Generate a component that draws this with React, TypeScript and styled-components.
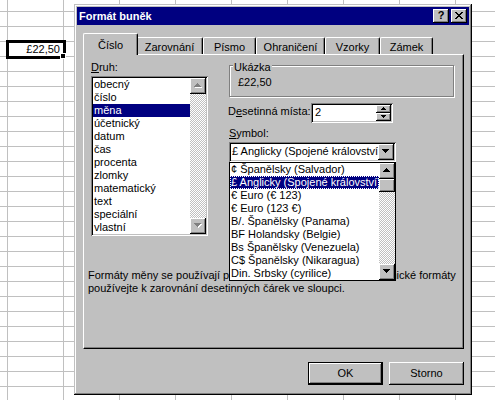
import React from "react";
import styled, { createGlobalStyle } from "styled-components";

const FACE = "#c0c0c0";
const SHADOW = "#808080";
const NAVY = "#000080";

const raised = `
  background: ${FACE};
  box-shadow: inset -1px -1px #000, inset 1px 1px #fff, inset -2px -2px ${SHADOW};
`;

const sunken = `
  background: #fff;
  box-shadow: inset 1px 1px ${SHADOW}, inset -1px -1px #fff, inset 2px 2px #000, inset -2px -2px ${FACE};
`;

const GlobalStyle = createGlobalStyle`
  html, body { margin: 0; padding: 0; }
  body {
    width: 495px;
    height: 400px;
    overflow: hidden;
    background: #fff;
    font-family: "Liberation Sans", Arial, sans-serif;
    font-size: 11px;
    line-height: 13px;
    color: #000;
  }
  * { box-sizing: border-box; }
`;

const CATEGORIES = [
  "obecný",
  "číslo",
  "měna",
  "účetnický",
  "datum",
  "čas",
  "procenta",
  "zlomky",
  "matematický",
  "text",
  "speciální",
  "vlastní",
];

const SYMBOLS = [
  "¢ Španělsky (Salvador)",
  "£ Anglicky (Spojené království)",
  "€ Euro (€ 123)",
  "€ Euro (123 €)",
  "B/. Španělsky (Panama)",
  "BF Holandsky (Belgie)",
  "Bs Španělsky (Venezuela)",
  "C$ Španělsky (Nikaragua)",
  "Din. Srbsky (cyrilice)",
];

const TABS: [string, number][] = [
  ["Číslo", 51],
  ["Zarovnání", 67],
  ["Písmo", 53],
  ["Ohraničení", 69],
  ["Vzorky", 55],
  ["Zámek", 53],
];

const ARROWS = {
  up: "M3 0h1v1H3zM2 1h3v1H2zM1 2h5v1H1zM0 3h7v1H0z",
  down: "M0 0h7v1H0zM1 1h5v1H1zM2 2h3v1H2zM3 3h1v1H3z",
  upSmall: "M2 0h1v1H2zM1 1h3v1H1zM0 2h5v1H0z",
  downSmall: "M0 0h5v1H0zM1 1h3v1H1zM2 2h1v1H2z",
};

function Arrow({ dir, disabled }: { dir: keyof typeof ARROWS; disabled?: boolean }) {
  const small = dir.endsWith("Small");
  const w = small ? 5 : 7;
  const h = small ? 3 : 4;
  return (
    <svg width={w + 1} height={h + 1} viewBox={`0 0 ${w + 1} ${h + 1}`} shapeRendering="crispEdges" style={{ display: "block" }}>
      {disabled && <path d={ARROWS[dir]} fill="#fff" transform="translate(1 1)" />}
      <path d={ARROWS[dir]} fill={disabled ? SHADOW : "#000"} />
    </svg>
  );
}

function CloseGlyph() {
  return (
    <svg width="8" height="7" viewBox="0 0 8 7" shapeRendering="crispEdges" style={{ display: "block" }}>
      <path
        d="M0 0h2v1H0zM6 0h2v1H6zM1 1h2v1H1zM5 1h2v1H5zM2 2h4v1H2zM3 3h2v1H3zM2 4h4v1H2zM1 5h2v1H1zM5 5h2v1H5zM0 6h2v1H0zM6 6h2v1H6z"
        fill="#000"
      />
    </svg>
  );
}

function Scrollbar({ disabled, thumb }: { disabled?: boolean; thumb?: boolean }) {
  return (
    <ScrollTrack>
      <ScrollButton>
        <Arrow dir="up" disabled={disabled} />
      </ScrollButton>
      <Track>{thumb && <Thumb />}</Track>
      <ScrollButton>
        <Arrow dir="down" disabled={disabled} />
      </ScrollButton>
    </ScrollTrack>
  );
}

function Dialog() {
  return (
    <Window>
      <TitleBar>
        <TitleText>Formát buněk</TitleText>
        <CaptionButton>?</CaptionButton>
        <CaptionButton $gap={2}>
          <CloseGlyph />
        </CaptionButton>
      </TitleBar>
      <Body>
        <TabRow>
          {TABS.map(([label, w], i) => (
            <Tab key={label} $w={w} $active={i === 0}>
              {label}
            </Tab>
          ))}
        </TabRow>
        <Panel>
          <Top>
            <LeftCol>
              <FieldLabel>
                <Key>D</Key>ruh:
              </FieldLabel>
              <ListBox>
                <Items>
                  {CATEGORIES.map((c, i) => (
                    <Item key={c} $selected={i === 2}>
                      {c}
                    </Item>
                  ))}
                </Items>
                <Scrollbar disabled />
              </ListBox>
            </LeftCol>
            <RightCol>
              <GroupBox>
                <Legend>Ukázka</Legend>
                <Sample>£22,50</Sample>
              </GroupBox>
              <SpinRow>
                <SpinLabel>
                  D<Key>e</Key>setinná místa:
                </SpinLabel>
                <SpinEdit>
                  <EditText>2</EditText>
                  <SpinButtons>
                    <SpinButton>
                      <Arrow dir="upSmall" />
                    </SpinButton>
                    <SpinButton>
                      <Arrow dir="downSmall" />
                    </SpinButton>
                  </SpinButtons>
                </SpinEdit>
              </SpinRow>
              <SymbolLabel>
                <Key>S</Key>ymbol:
              </SymbolLabel>
              <Combo>
                <ComboText>£ Anglicky (Spojené království)</ComboText>
                <ComboButton>
                  <Arrow dir="down" />
                </ComboButton>
              </Combo>
            </RightCol>
          </Top>
          <Description>
            <Line>Formáty měny se používají pro obecné peněžní hodnoty. Účetnické formáty</Line>
            <Line>používejte k zarovnání desetinných čárek ve sloupci.</Line>
          </Description>
          <DropList>
            <Items>
              {SYMBOLS.map((s, i) => (
                <DropItem key={s} $selected={i === 1}>
                  {s}
                </DropItem>
              ))}
            </Items>
            <Scrollbar thumb />
          </DropList>
        </Panel>
        <Footer>
          <PushButton $default>OK</PushButton>
          <PushButton>Storno</PushButton>
        </Footer>
      </Body>
    </Window>
  );
}

export default function App() {
  const cells: React.ReactNode[] = [];
  for (let r = 0; r < 27; r++) {
    for (let c = 0; c < 10; c++) {
      const active = r === 3 && c === 1;
      cells.push(
        <Cell key={`${r}-${c}`} $active={active}>
          {active && (
            <>
              £22,50
              <FillHandle />
            </>
          )}
        </Cell>
      );
    }
  }
  return (
    <>
      <GlobalStyle />
      <Sheet>
        {cells}
        <Dialog />
      </Sheet>
    </>
  );
}

const Sheet = styled.div`
  position: relative;
  width: 495px;
  height: 400px;
  overflow: hidden;
  display: grid;
  grid-template-columns: 8px repeat(9, 56px);
  grid-template-rows: 12px repeat(26, 15px);
`;

const Cell = styled.div<{ $active?: boolean }>`
  border-right: 1px solid ${FACE};
  border-bottom: 1px solid ${FACE};
  ${({ $active }) =>
    $active &&
    `
    position: relative;
    z-index: 1;
    display: flex;
    align-items: center;
    justify-content: flex-end;
    padding-right: 3px;
    outline: 3px solid #000;
    outline-offset: -1px;
    white-space: nowrap;
  `}
`;

const FillHandle = styled.span`
  position: absolute;
  right: -3px;
  bottom: -3px;
  width: 6px;
  height: 6px;
  background: #000;
  border: 1px solid #fff;
`;

const Window = styled.div`
  position: absolute;
  left: 74px;
  top: 4px;
  width: 398px;
  height: 391px;
  padding: 3px;
  display: flex;
  flex-direction: column;
  background: ${FACE};
  box-shadow: inset -1px -1px #000, inset 1px 1px ${FACE}, inset -2px -2px ${SHADOW}, inset 2px 2px #fff;
`;

const TitleBar = styled.div`
  height: 18px;
  flex: none;
  display: flex;
  align-items: center;
  padding: 0 2px;
  background: ${NAVY};
`;

const TitleText = styled.div`
  flex: 1;
  color: #fff;
  font-weight: 700;
  white-space: nowrap;
`;

const CaptionButton = styled.div<{ $gap?: number }>`
  ${raised}
  width: 16px;
  height: 14px;
  margin-left: ${({ $gap }) => $gap ?? 0}px;
  display: flex;
  align-items: center;
  justify-content: center;
  font-weight: 700;
  font-size: 11px;
  padding-bottom: 1px;
`;

const Body = styled.div`
  flex: 1;
  display: flex;
  flex-direction: column;
  padding: 8px 5px 7px 6px;
`;

const TabRow = styled.div`
  position: relative;
  z-index: 1;
  height: 22px;
  display: flex;
  align-items: flex-end;
  padding-left: 2px;
  margin-bottom: -1px;
`;

const Tab = styled.div<{ $w: number; $active?: boolean }>`
  position: relative;
  z-index: ${({ $active }) => ($active ? 2 : 1)};
  width: ${({ $w, $active }) => $w + ($active ? 4 : 0)}px;
  height: ${({ $active }) => ($active ? 22 : 17)}px;
  margin: ${({ $active }) => ($active ? "0 -2px" : "0 0 1px")};
  padding-top: ${({ $active }) => ($active ? 5 : 3)}px;
  background: ${FACE};
  border-top: 1px solid #fff;
  border-left: 1px solid #fff;
  border-right: 1px solid #000;
  border-radius: 2px 2px 0 0;
  box-shadow: inset -1px 0 ${SHADOW};
  text-align: center;
  white-space: nowrap;
`;

const Panel = styled.div`
  position: relative;
  height: 295px;
  flex: none;
  padding: 6px 0 0 7px;
  border-top: 1px solid #fff;
  border-left: 1px solid #fff;
  border-right: 1px solid #000;
  border-bottom: 1px solid #000;
  box-shadow: inset -1px -1px ${SHADOW};
`;

const Top = styled.div`
  display: flex;
  align-items: flex-start;
`;

const LeftCol = styled.div`
  width: 117px;
  display: flex;
  flex-direction: column;
`;

const RightCol = styled.div`
  width: 225px;
  margin-left: 21px;
  display: flex;
  flex-direction: column;
`;

const Key = styled.span`
  text-decoration: underline;
`;

const FieldLabel = styled.div`
  height: 13px;
  margin-bottom: 2px;
`;

const ListBox = styled.div`
  ${sunken}
  height: 160px;
  padding: 2px;
  display: flex;
`;

const Items = styled.div`
  flex: 1;
  min-width: 0;
  overflow: hidden;
`;

const Item = styled.div<{ $selected?: boolean }>`
  height: 13px;
  padding-left: 1px;
  white-space: nowrap;
  background: ${({ $selected }) => ($selected ? NAVY : "transparent")};
  color: ${({ $selected }) => ($selected ? "#fff" : "#000")};
`;

const ScrollTrack = styled.div`
  width: 16px;
  flex: none;
  display: flex;
  flex-direction: column;
`;

const ScrollButton = styled.div`
  ${raised}
  height: 16px;
  flex: none;
  display: flex;
  align-items: center;
  justify-content: center;
  padding-bottom: 1px;
`;

const Track = styled.div`
  flex: 1;
  background-color: #fff;
  background-image: repeating-conic-gradient(${FACE} 0 25%, #fff 0 50%);
  background-size: 2px 2px;
`;

const Thumb = styled.div`
  ${raised}
  height: 13px;
`;

const GroupBox = styled.div`
  position: relative;
  margin-top: 4px;
  height: 32px;
  padding: 10px 0 0 8px;
  border: 1px solid ${SHADOW};
  box-shadow: inset 1px 1px #fff, 1px 1px #fff;
`;

const Legend = styled.span`
  position: absolute;
  top: -5px;
  left: 3px;
  padding: 0 1px;
  background: ${FACE};
`;

const Sample = styled.div`
  white-space: nowrap;
`;

const SpinRow = styled.div`
  display: flex;
  align-items: flex-start;
  margin-top: 6px;
  margin-left: -1px;
`;

const SpinLabel = styled.div`
  width: 83px;
  padding-top: 2px;
  white-space: nowrap;
`;

const SpinEdit = styled.div`
  ${sunken}
  width: 82px;
  height: 20px;
  padding: 2px;
  display: flex;
`;

const EditText = styled.div`
  flex: 1;
  padding: 1px 0 0 2px;
`;

const SpinButtons = styled.div`
  width: 15px;
  display: flex;
  flex-direction: column;
`;

const SpinButton = styled.div`
  ${raised}
  height: 8px;
  display: flex;
  align-items: center;
  justify-content: center;
`;

const SymbolLabel = styled.div`
  height: 13px;
  margin: 4px 0 2px;
`;

const Combo = styled.div`
  ${sunken}
  width: 167px;
  height: 20px;
  padding: 2px;
  display: flex;
`;

const ComboText = styled.div`
  flex: 1;
  min-width: 0;
  overflow: hidden;
  white-space: nowrap;
  padding: 1px 0 0 1px;
`;

const ComboButton = styled(ScrollButton)`
  width: 16px;
  height: 16px;
`;

const Description = styled.div`
  margin: 33px 0 0 -3px;
`;

const Line = styled.div`
  white-space: nowrap;
`;

const DropList = styled.div`
  position: absolute;
  left: 145px;
  top: 107px;
  width: 167px;
  height: 119px;
  border: 1px solid #000;
  background: #fff;
  display: flex;
`;

const DropItem = styled.div<{ $selected?: boolean }>`
  height: 13px;
  padding-left: 1px;
  white-space: nowrap;
  overflow: hidden;
  background: ${({ $selected }) => ($selected ? NAVY : "transparent")};
  color: ${({ $selected }) => ($selected ? "#fff" : "#000")};
  outline: ${({ $selected }) => ($selected ? "1px dotted #fff" : "none")};
  outline-offset: -1px;
`;

const Footer = styled.div`
  display: flex;
  justify-content: flex-end;
  gap: 6px;
  margin-top: 13px;
`;

const PushButton = styled.div<{ $default?: boolean }>`
  ${raised}
  width: 75px;
  height: 23px;
  display: flex;
  align-items: center;
  justify-content: center;
  border: ${({ $default }) => ($default ? "1px solid #000" : "none")};
`;
